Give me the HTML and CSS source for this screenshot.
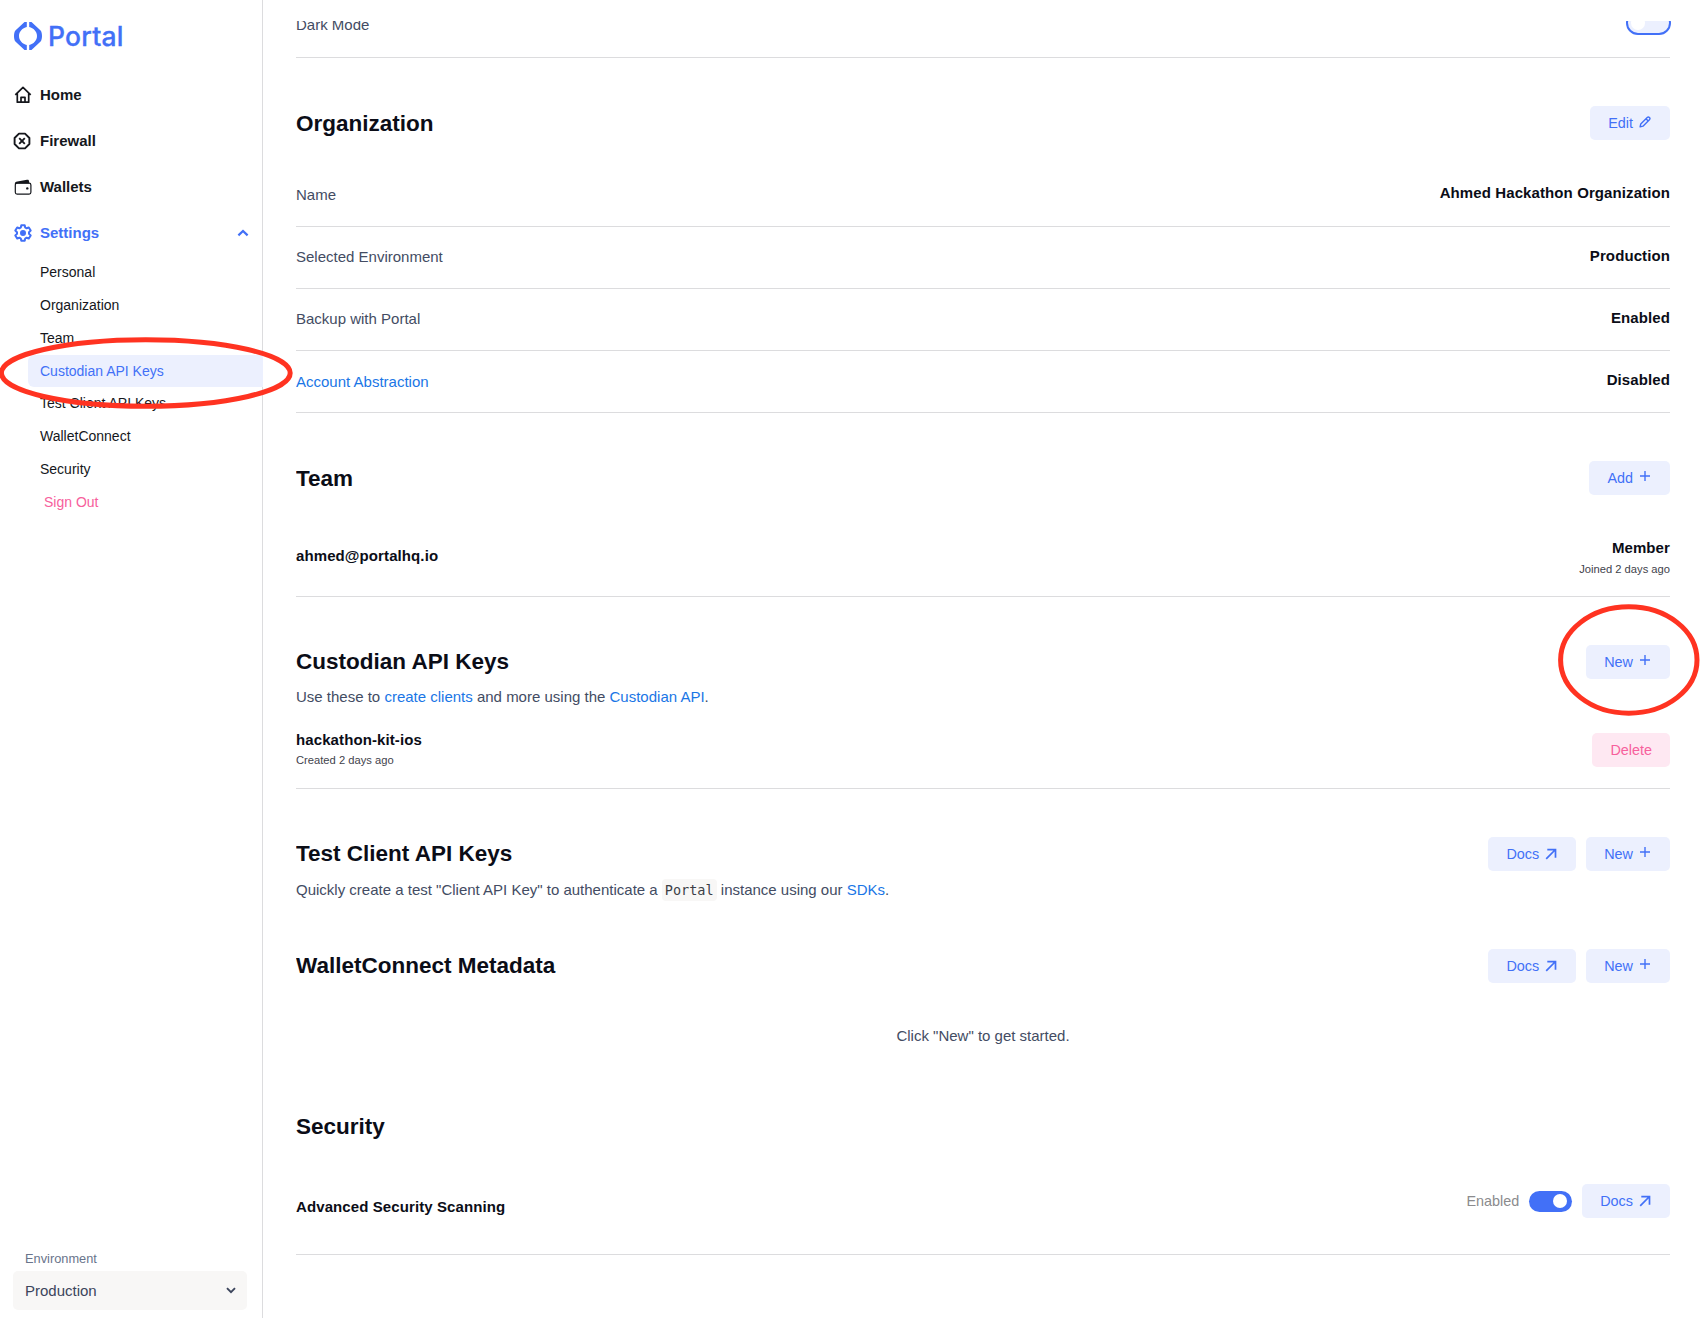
FILE: index.html
```html
<!DOCTYPE html>
<html lang="en">
<head>
<meta charset="utf-8">
<title>Portal – Settings</title>
<link rel="stylesheet" href="styles.css">
</head>
<body>
<svg class="defs" width="0" height="0" aria-hidden="true">
  <symbol id="plus" viewBox="0 0 12 12"><path d="M6 1v10M1 6h10" fill="none" stroke="currentColor" stroke-width="1.4"/></symbol>
  <symbol id="arrow" viewBox="0 0 12 12"><path d="M1.2 10.8 10 2M2.3 1.7h8.2v8" fill="none" stroke="currentColor" stroke-width="1.7"/></symbol>
  <symbol id="pencil" viewBox="0 0 13 13"><path d="M1.2 11.8 1.9 8.6 8.9 1.6a1.6 1.6 0 0 1 2.4 2.4L4.3 11zM7.6 3l2.4 2.4" fill="none" stroke="currentColor" stroke-width="1.5" stroke-linejoin="round"/></symbol>
</svg>
<div class="app">
  <aside class="sidebar">
    <div class="logo">
      <svg class="logo-mark" viewBox="0 0 28 28" fill="currentColor"><path d="M12.8 0v5C8.5 6 5 9.500 5 14S8.500 22 12.800 23V28h-2.300L1.400 19.500C.4 18.300 0 16 0 14S.4 9.700 1.400 8.500L10.500 0zM15.200 0v5C19.500 6 23 9.500 23 14S19.500 22 15.200 23V28h2.300L26.600 19.500C27.600 18.300 28 16 28 14S27.600 9.700 26.600 8.500L17.500 0z"/></svg>
      <span class="logo-text">Portal</span>
    </div>
    <nav class="nav">
      <a class="nav-item"><svg class="nav-icon" viewBox="0 0 18 18" fill="none" stroke="currentColor" stroke-width="1.7" stroke-linejoin="round"><path d="M3.300 7v9.200h11.400V7M1.300 8.800 9 1.400l7.700 7.400M7 16v-4.700h4V16"/></svg>Home</a>
      <a class="nav-item"><svg class="nav-icon firewall" viewBox="0 0 18 18" fill="none" stroke="currentColor" stroke-width="1.9" stroke-linejoin="round"><path d="M6 1.600h6L16.400 6v6L12 16.400H6L1.600 12V6z"/><path d="m6.200 6.200 5.600 5.600M11.800 6.200l-5.600 5.600"/></svg>Firewall</a>
      <a class="nav-item"><svg class="nav-icon" viewBox="0 0 18 18"><rect x="1.300" y="5.100" width="15.600" height="11" rx="1.800" fill="none" stroke="currentColor" stroke-width="1.2"/><path d="M.8 6.200C.8 4.400 1.700 3.900 3.400 3.600L13 1.800c1.500-.2 2 .5 2.100 1.700L15.300 5.500H4z" fill="currentColor"/><circle cx="13.300" cy="10.400" r="1.200" fill="currentColor"/></svg>Wallets</a>
      <a class="nav-item open"><svg class="nav-icon" viewBox="0 0 18 18" fill="none" stroke="currentColor" stroke-width="2" stroke-linejoin="round"><path d="M7.300 1.200h3.400l.5 2.300 1.400.8 2.200-.8 1.900 3.100L15 8.200v1.600l1.700 1.600-1.900 3.100-2.200-.8-1.400.8-.5 2.300H7.300l-.5-2.300-1.400-.8-2.200.8-1.900-3.100L3 9.800V8.200L1.300 6.600l1.900-3.100 2.200.8 1.400-.8z"/><circle cx="9" cy="9" r="2" fill="currentColor"/></svg>Settings
        <svg class="chev-up" viewBox="0 0 12 8"><path d="M1.400 6.400 6 2l4.600 4.400" fill="none" stroke="currentColor" stroke-width="2.2"/></svg></a>
      <div class="subnav">
        <a>Personal</a><a>Organization</a><a>Team</a><a class="active">Custodian API Keys</a><a>Test Client API Keys</a><a>WalletConnect</a><a>Security</a><a class="signout">Sign Out</a>
      </div>
    </nav>
    <div class="env">
      <span class="env-label">Environment</span>
      <div class="select">Production<svg class="chev-down" viewBox="0 0 10 7"><path d="m1 1.200 4 4 4-4" fill="none" stroke="currentColor" stroke-width="1.9"/></svg></div>
    </div>
  </aside>

  <main class="content">
    <div class="row clipped"><span class="label">Dark Mode</span><span class="toggle off"></span></div>

    <section>
      <header class="low"><h2>Organization</h2><button class="btn">Edit<svg class="ico pencil"><use href="#pencil"/></svg></button></header>
      <div class="row"><span class="label">Name</span><b class="value first">Ahmed Hackathon Organization</b></div>
      <div class="row"><span class="label">Selected Environment</span><b class="value">Production</b></div>
      <div class="row"><span class="label">Backup with Portal</span><b class="value">Enabled</b></div>
      <div class="row"><a class="link">Account Abstraction</a><b class="value">Disabled</b></div>
    </section>

    <section>
      <header class="low"><h2>Team</h2><button class="btn">Add<svg class="ico"><use href="#plus"/></svg></button></header>
      <div class="row tall"><b class="email">ahmed@portalhq.io</b><div class="stack right"><b>Member</b><small>Joined 2 days ago</small></div></div>
    </section>

    <section>
      <header class="tight"><h2>Custodian API Keys</h2><button class="btn">New<svg class="ico"><use href="#plus"/></svg></button></header>
      <p class="desc">Use these to <a class="link">create clients</a> and more using the <a class="link">Custodian API</a>.</p>
      <div class="row tall key"><div class="stack"><b>hackathon-kit-ios</b><small>Created 2 days ago</small></div><button class="btn danger">Delete</button></div>
    </section>

    <section>
      <header class="tight"><h2>Test Client API Keys</h2><div class="actions"><button class="btn">Docs<svg class="ico arrow"><use href="#arrow"/></svg></button><button class="btn">New<svg class="ico"><use href="#plus"/></svg></button></div></header>
      <p class="desc code-desc">Quickly create a test "Client API Key" to authenticate a <code>Portal</code> instance using our <a class="link">SDKs</a>.</p>
    </section>

    <section class="wallet">
      <header class="tight"><h2>WalletConnect Metadata</h2><div class="actions"><button class="btn">Docs<svg class="ico arrow"><use href="#arrow"/></svg></button><button class="btn">New<svg class="ico"><use href="#plus"/></svg></button></div></header>
      <p class="empty">Click "New" to get started.</p>
    </section>

    <section class="security">
      <header><h2>Security</h2></header>
      <div class="row scan"><b>Advanced Security Scanning</b><div class="actions"><span class="state">Enabled</span><span class="toggle on"></span><button class="btn">Docs<svg class="ico arrow"><use href="#arrow"/></svg></button></div></div>
    </section>
  </main>
</div>
<svg class="marks" viewBox="0 0 1703 1318" fill="none" stroke="#ff3321" stroke-width="5" aria-hidden="true">
  <ellipse cx="145.800" cy="373" rx="144.400" ry="33.200"/>
  <ellipse cx="1628.800" cy="660" rx="68.200" ry="53.200"/>
</svg>
</body>
</html>
```
FILE: styles.css
```css
* { box-sizing: border-box; }
body {
  margin: 0;
  background: #fff;
  color: #0b0d17;
  font: 15px/20px "Liberation Sans", Arial, sans-serif;
}
.defs { display: none; }
.app { display: flex; height: 1318px; overflow: hidden; }

/* Sidebar */
.sidebar {
  width: 263px;
  display: flex;
  flex-direction: column;
  border-right: 1px solid #dcdcde;
  color: #15171c;
}
.logo {
  display: flex;
  align-items: center;
  height: 72px;
  padding-left: 14px;
  color: #4270f7;
}
.logo-mark { width: 28px; height: 28px; }
.logo-text { margin-left: 6px; font: 500 26.5px/32px Inter, sans-serif; letter-spacing: 0.2px; padding-bottom: 1px; -webkit-text-stroke: 0.3px currentColor; }
.nav-item {
  display: flex;
  align-items: center;
  height: 46px;
  padding: 0 13px 0 14px;
  font-weight: 700;
}
.nav-item.open { color: #4270f7; }
.nav-icon { width: 18px; height: 18px; margin-right: 8px; }
.firewall { margin: 0 9px 0 -1px; }
.chev-up { width: 12px; height: 8px; margin-left: auto; }
.subnav { display: flex; flex-direction: column; padding: 0 0 0 28px; margin-right: -1px; }
.subnav a { height: 32.85px; padding-left: 12px; font-size: 14px; line-height: 33px; }
.subnav .active { background: #ecf0fe; color: #4270f7; border-radius: 6px 0 0 6px; }
.subnav .signout { padding-left: 16px; color: #f7609c; }
.env { margin-top: auto; padding: 0 15px 8px 13px; }
.env-label { display: block; padding-left: 12px; font-size: 12.8px; line-height: 24px; color: #69748b; }
.select {
  display: flex;
  align-items: center;
  justify-content: space-between;
  height: 39px;
  padding: 0 11px 0 12px;
  border-radius: 5px;
  background: #f8f7f6;
  color: #3c455c;
}
.chev-down { width: 10px; height: 7px; }

/* Content */
.content { flex: 1; margin: 21px 32px 0 33px; overflow: hidden; padding-right: 1px; }
.content b { letter-spacing: 0.1px; }
section { padding-top: 48px; }
header { display: flex; align-items: center; justify-content: space-between; height: 34px; margin-bottom: 25px; }
header.tight { margin-bottom: 0; }
h2 { margin: 0; font-size: 22.5px; line-height: 28px; }
.low h2 { padding-top: 2px; }
.row {
  display: flex;
  align-items: center;
  justify-content: space-between;
  height: 62px;
  border-bottom: 1px solid #dcdcde;
}
.clipped { height: 62px; margin-top: -25px; padding-bottom: 5px; }
.label, .desc, .empty { color: #434c63; }
.label { padding-bottom: 2px; }
.clipped .label { padding: 2px 0 0; }
.link { color: #1a76e6; }
.value { padding-bottom: 3px; }
.value.first { padding-bottom: 5px; }
.tall { height: 77px; }
.email { padding-bottom: 4px; }
.stack { display: flex; flex-direction: column; }
.stack small { font-size: 11.2px; line-height: 20px; color: #3f434c; }
.stack.right { align-items: flex-end; gap: 1px; }
.desc { margin: 0; height: 33px; padding-top: 8px; }
.code-desc { height: 30px; padding-top: 9px; }
code {
  padding: 3px;
  border-radius: 4px;
  background: #f8f7f6;
  color: #3b3f46;
  font: 13.5px/15px "DejaVu Sans Mono", monospace;
}
.wallet { height: 161px; }
.empty { margin: 0; padding-top: 43px; text-align: center; }
.scan { height: 86px; }
.scan > b { padding-bottom: 9px; }
.scan .actions { padding-bottom: 21px; }
.actions { display: flex; align-items: center; gap: 10px; }
.state { font-size: 14.4px; color: #8b8b8d; }

.btn {
  display: inline-flex;
  align-items: center;
  height: 34px;
  padding: 0 18px;
  border: 0;
  border-radius: 5px;
  background: #ecf0fe;
  color: #4270f7;
  font: 14.4px/20px "Liberation Sans", Arial, sans-serif;
}
.danger { background: #fee8f2; color: #f7609c; }
.ico { width: 12px; height: 12px; margin: 0 1px 4px 6px; }
.pencil { margin-bottom: 3px; }
.arrow { margin-bottom: 1px; }

.toggle { width: 43px; height: 21px; border-radius: 11px; display: flex; align-items: center; }
.toggle::before { content: ""; width: 14px; height: 14px; border-radius: 50%; background: #fff; }
.toggle.on { background: #4270f7; justify-content: flex-end; padding-right: 5px; }
.toggle.off { width: 45px; height: 24px; margin: 0 -1px 3px 0; border: 2px solid #4270f7; border-radius: 12px; background: #ecf0fe; padding-left: 3px; }

.marks { position: absolute; left: 0; top: 0; width: 1703px; height: 1318px; pointer-events: none; }
```
